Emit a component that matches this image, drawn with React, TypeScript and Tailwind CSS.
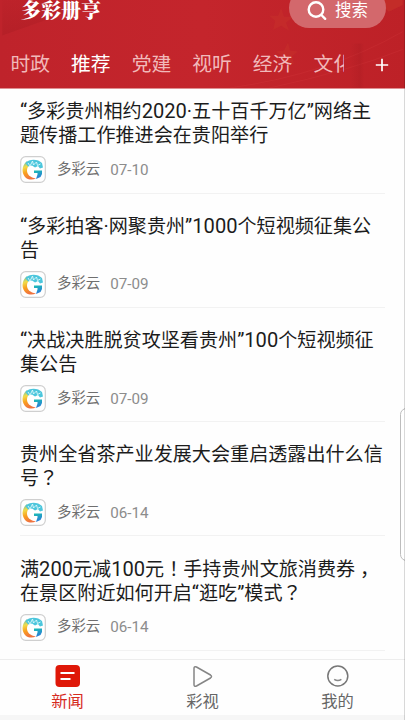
import { clsx } from "clsx";
import { ReactNode } from "react";

type Article = {
  lines: string[];
  date: string;
};

const tabs = ["时政", "推荐", "党建", "视听", "经济", "文化"];

const articles: Article[] = [
  {
    lines: [
      "“多彩贵州相约2020·五十百千万亿”网络主",
      "题传播工作推进会在贵阳举行",
    ],
    date: "07-10",
  },
  { lines: ["“多彩拍客·网聚贵州”1000个短视频征集公", "告"], date: "07-09" },
  {
    lines: ["“决战决胜脱贫攻坚看贵州”100个短视频征", "集公告"],
    date: "07-09",
  },
  { lines: ["贵州全省茶产业发展大会重启透露出什么信", "号？"], date: "06-14" },
  {
    lines: [
      "满200元减100元！手持贵州文旅消费券，",
      "在景区附近如何开启“逛吃”模式？",
    ],
    date: "06-14",
  },
];

export default function App() {
  return (
    <div
      lang="zh-CN"
      className="relative flex h-[720px] w-[405px] flex-col overflow-hidden bg-[#fefefe] font-[Roboto,'Noto_Sans_CJK_SC',sans-serif]"
    >
      <Header />
      <main className="flex-1 overflow-hidden px-5">
        {articles.map((article, i) => (
          <ArticleRow key={i} first={i === 0} {...article} />
        ))}
      </main>
      <BottomNav />
      {/* Edge panel handle */}
      <div className="absolute top-[408px] -right-2 h-[153px] w-[13px] rounded-lg border-[1.5px] border-[#bdbdbd] bg-white" />
      <div className="absolute top-0 right-0 h-full w-px bg-black/15" />
    </div>
  );
}

function Header() {
  return (
    <header className="relative h-[89px] shrink-0 overflow-hidden border-b border-[#df8f92] bg-linear-to-r from-[#bf232b] via-[#c4252c] to-[#bd2127] text-white">
      <HeaderArt />
      <div className="relative flex h-7 items-start justify-between pr-[19px] pl-[21px]">
        <h1 className="-mt-px font-['Noto_Serif_CJK_SC','Noto_Sans_CJK_SC',serif] text-[20px] leading-[22px] font-black whitespace-nowrap">
          多彩册亨
        </h1>
        <div className="-mt-3 flex h-10 w-[97px] items-center gap-2 rounded-full bg-[#d3686c] pt-1.5 pl-[18px]">
          <svg
            viewBox="0 0 20 20"
            className="size-5"
            fill="none"
            stroke="currentColor"
            strokeWidth="2.4"
            strokeLinecap="round"
          >
            <circle cx="9" cy="8.500" r="7.300" />
            <path d="m14.400 14 3.800 3.800" />
          </svg>
          <span className="text-[16.5px] leading-5">搜索</span>
        </div>
      </div>
      <div className="relative mt-[17px] flex h-10 items-center">
        <div className="flex w-[344px] shrink-0 gap-[21px] overflow-hidden pl-[10.5px] text-[19.8px] leading-10 whitespace-nowrap">
          {tabs.map((tab) => (
            <span
              key={tab}
              className={clsx(
                "shrink-0",
                tab === "推荐" ? "text-white" : "text-[#f1b9ba]",
              )}
            >
              {tab}
            </span>
          ))}
        </div>
        <svg
          viewBox="0 0 14 14"
          className="ml-[31px] size-3.5"
          stroke="currentColor"
          strokeWidth="1.7"
        >
          <path d="M7 .8v12.400M.8 7h12.400" />
        </svg>
      </div>
    </header>
  );
}

function HeaderArt() {
  return (
    <svg viewBox="0 0 405 89" className="absolute inset-0 h-full w-full">
      <defs>
        <linearGradient id="fold">
          <stop offset="0" stopColor="#8e141a" stopOpacity="0" />
          <stop offset=".7" stopColor="#8e141a" stopOpacity=".15" />
          <stop offset="1" stopColor="#8e141a" stopOpacity="0" />
        </linearGradient>
        <linearGradient id="shade" x1="0" y1="0" x2=".4" y2="1">
          <stop offset="0" stopColor="#ad1d24" stopOpacity=".1" />
          <stop offset="1" stopColor="#ad1d24" stopOpacity=".6" />
        </linearGradient>
      </defs>
      <path d="M0 0h101L0 36z" fill="url(#shade)" />
      <path
        d="m282 8 3 9 9 0-7 6 3 8-8-5-8 4 2-9-6-5 9 0zM289 43l2 8 8 1-6 5 2 8-7-4-7 4 2-8-6-5 8-1z"
        fill="#d2442b"
        opacity=".2"
      />
      <path d="M378 0h27v5l-14 7z" fill="#d2442b" opacity=".3" />
      <path
        d="M230 89Q330 75 405 32M270 89Q350 72 405 50"
        fill="none"
        stroke="#d53c42"
        opacity=".25"
      />
      <path d="M352 44h14v45h-14z" fill="url(#fold)" />
    </svg>
  );
}

function Title({ text }: { text: string }) {
  return (
    <span className="block h-6">
      {text.split(/([“”·\d]+|[！？]|，)/).map((part, i) => {
        if (/^[“”·\d]/.test(part))
          return (
            <span key={i} className="text-[20.1px] leading-none">
              {part}
            </span>
          );
        // full-width marks sit in the middle of their cell
        if (/^[！？]/.test(part))
          return (
            <span
              key={i}
              lang="zh-TW"
              className="font-['Noto_Sans_CJK_TC'] leading-none"
            >
              {part}
            </span>
          );
        if (part === "，")
          return (
            <span key={i} className="pl-[5px]">
              {part}
            </span>
          );
        return part;
      })}
    </span>
  );
}

function ArticleRow({ lines, date, first }: Article & { first: boolean }) {
  return (
    <article
      className={clsx(
        "border-b border-[#f2f2f2]",
        first ? "h-[104.5px] pt-[11px]" : "h-[114.3px] pt-[21.4px]",
      )}
    >
      <h2 className="text-[19.1px] leading-6 whitespace-nowrap text-[#1c1c1c]">
        {lines.map((line) => (
          <Title key={line} text={line} />
        ))}
      </h2>
      <div className="mt-2 flex items-center">
        <SourceLogo />
        <span className="ml-[11px] text-[14.4px] leading-5 text-[#6f6f6f]">
          多彩云
        </span>
        <span className="ml-2.5 text-[15.2px] leading-5 text-[#8c8c8c]">
          {date}
        </span>
      </div>
    </article>
  );
}

function SourceLogo() {
  return (
    <svg viewBox="0 0 26 27" className="h-[27px] w-[26px]" fill="none">
      <defs>
        <linearGradient id="ring" x1="0" y1="0" x2=".3" y2="1">
          <stop offset="0" stopColor="#3fb5cf" />
          <stop offset=".35" stopColor="#f0dc4a" />
          <stop offset=".65" stopColor="#f9a01f" />
          <stop offset="1" stopColor="#f0733f" />
        </linearGradient>
        <linearGradient id="stem" x1="0" y1="0" x2=".3" y2="1">
          <stop offset="0" stopColor="#19c0b4" />
          <stop offset="1" stopColor="#2c7bd8" />
        </linearGradient>
      </defs>
      <rect
        x=".7"
        y=".7"
        width="24.600"
        height="25.600"
        rx="5"
        fill="#fff"
        stroke="#cfcfcf"
        strokeWidth="1.200"
      />
      <path
        d="M7 5C1 10 1.500 18 6 22C9 24 13 24 16 22.500C10 21.500 7 18.500 7 14.500C7 12 8 10 10 8.500z"
        fill="url(#ring)"
      />
      <path
        d="M5.500 7C9 2.500 18 2.500 22 7L23 11.500L20 12.500L18 10L15 11.500L12 9.500L8 10.500z"
        fill="#4cc6dc"
      />
      <path
        d="m8 7 2 3 2.500-5 1 4 3-3 1 3.500 3-1.500"
        stroke="#dff8fa"
        strokeWidth=".9"
      />
      <path
        d="M14 14.500h8v3.500l-1.500 3-4.500 2 1.500-4.500v-1.500h-3.500z"
        fill="url(#stem)"
      />
    </svg>
  );
}

function BottomNav() {
  return (
    <nav className="flex h-[61px] shrink-0 border-t border-b-[5px] border-t-[#ededed] border-b-[#f6f6f6] bg-[#fefefe]">
      <NavItem label="新闻" active>
        <rect x=".500" y="0" width="24.500" height="22" rx="4" fill="#df1808" />
        <path d="M5.500 8h14M5.500 14h10" stroke="#fff" strokeWidth="2" />
      </NavItem>
      <NavItem label="彩视">
        <path
          d="M4 3.500v16q0 2.500 2.500 1.500l14-8q2-1.500 0-3l-14-8q-2.500-1-2.500 1.500z"
          stroke="#858585"
          strokeWidth="1.500"
        />
      </NavItem>
      <NavItem label="我的">
        <circle cx="12.800" cy="11" r="10" stroke="#777" strokeWidth="1.500" />
        <path
          d="M9.200 14.300q3.600 2.600 7.200 0"
          stroke="#888"
          strokeWidth="1.500"
        />
      </NavItem>
    </nav>
  );
}

function NavItem({
  label,
  active,
  children,
}: {
  label: string;
  active?: boolean;
  children: ReactNode;
}) {
  return (
    <div
      className={clsx(
        "flex flex-1 flex-col items-center pt-[5px] text-[16.3px]",
        active ? "text-[#d62b1f]" : "text-[#666]",
      )}
    >
      <svg viewBox="0 0 26 23" className="h-[23px] w-[26px]" fill="none">
        {children}
      </svg>
      <span className="mt-1 leading-5">{label}</span>
    </div>
  );
}
